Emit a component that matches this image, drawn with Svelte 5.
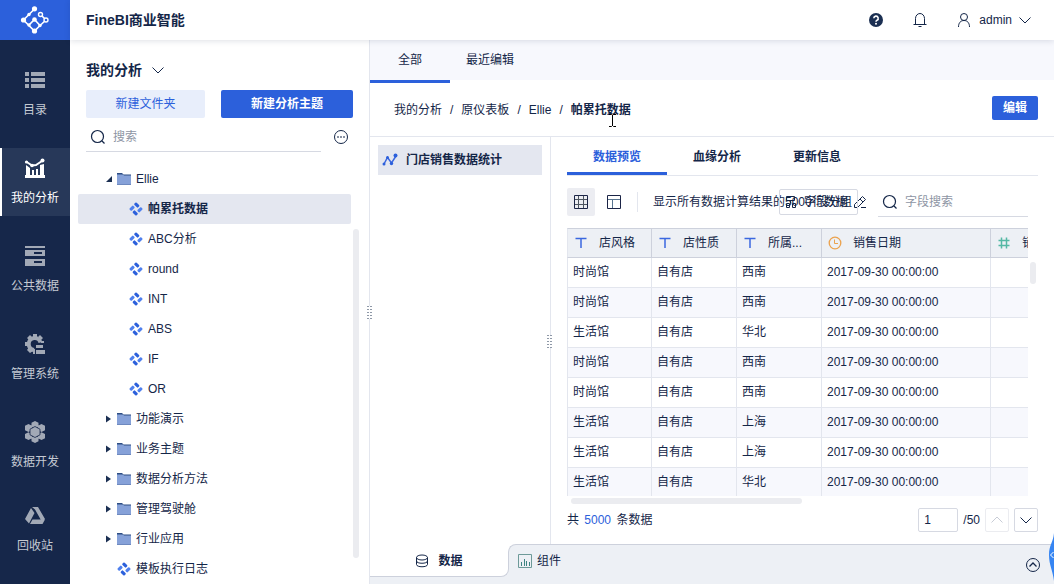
<script lang="ts">
  const navItems = [
    { id: 'catalog', label: '目录' },
    { id: 'analysis', label: '我的分析' },
    { id: 'public', label: '公共数据' },
    { id: 'system', label: '管理系统' },
    { id: 'develop', label: '数据开发' },
    { id: 'trash', label: '回收站' },
  ];

  const subjects = ['帕累托数据', 'ABC分析', 'round', 'INT', 'ABS', 'IF', 'OR'];
  const folders = ['功能演示', '业务主题', '数据分析方法', '管理驾驶舱', '行业应用'];
  const crumbs = ['我的分析', '原仪表板', 'Ellie'];
  const previewTabs = ['数据预览', '血缘分析', '更新信息'];

  const columns = [
    { name: '店风格', type: 'text' },
    { name: '店性质', type: 'text' },
    { name: '所属大区', short: '所属...', type: 'text' },
    { name: '销售日期', type: 'date' },
    { name: '销售额', type: 'number' },
  ];

  const rows = [
    ['时尚馆', '自有店', '西南'],
    ['时尚馆', '自有店', '西南'],
    ['生活馆', '自有店', '华北'],
    ['时尚馆', '自有店', '西南'],
    ['时尚馆', '自有店', '西南'],
    ['生活馆', '自有店', '上海'],
    ['生活馆', '自有店', '上海'],
    ['生活馆', '自有店', '华北'],
  ];

  let activeNav = $state('analysis');
  let activeSubject = $state('帕累托数据');
  let activePreview = $state('数据预览');
  let keyword = $state('');
  let fieldKeyword = $state('');
  let rowLimit = $state('5000');
  let page = $state('1');
</script>

{#snippet chevron()}
  <svg class="chevron" width="12" height="12" viewBox="0 0 12 12" aria-hidden="true">
    <path d="M.5 3.5 6 9l5.500-5.500" fill="none" stroke="currentColor" />
  </svg>
{/snippet}

{#snippet magnifier()}
  <svg class="magnifier" width="16" height="16" viewBox="0 0 16 16" aria-hidden="true">
    <circle cx="7.500" cy="7.500" r="6" fill="none" stroke="currentColor" stroke-width="1.200" />
    <path d="m12 12 2.500 2.500" stroke="currentColor" stroke-width="1.300" />
  </svg>
{/snippet}

{#snippet subjectIcon()}
  <svg width="14" height="14" viewBox="0 0 14 14" aria-hidden="true">
    <g transform="rotate(45 7 7)">
      <rect x="2.100" y="2.100" width="5.300" height="3.100" rx="1" fill="#2c60db" />
      <rect x="8.800" y="2.100" width="3.100" height="5.300" rx="1" fill="#4f80ee" />
      <rect x="6.600" y="8.800" width="5.300" height="3.100" rx="1" fill="#2c60db" />
      <rect x="2.100" y="6.600" width="3.100" height="5.300" rx="1" fill="#4f80ee" />
    </g>
  </svg>
{/snippet}

{#snippet folderIcon()}
  <svg width="14" height="12" viewBox="0 0 14 12" aria-hidden="true">
    <path d="M0 0h5l1.500 1.500H14V6H0Z" fill="#2d4d83" />
    <path d="M0 1.500h6L7 2.500h7V12H0Z" fill="#86a1d8" />
    <path d="M0 11.500h14" stroke="#6e89bf" />
  </svg>
{/snippet}

{#snippet navIcon(id: string)}
  <svg width="22" height="22" viewBox="0 0 22 22" fill="currentColor" aria-hidden="true">
    {#if id === 'catalog'}
      <path d="M1 3h4v4H1zM7 3h14v4H7zM1 9h4v4H1zM7 9h14v4H7zM1 15h4v4H1zM7 15h14v4H7z" />
    {:else if id === 'analysis'}
      <path d="M1 18h20v3H1zM2 8l4 3v7H2zM8 13h2v5H8zM12 12h2v6h-2zM16 8l4-1v11h-4z" />
      <path d="M2 4.500 8 8.500l4-.5 6-4" fill="none" stroke="currentColor" stroke-width="2" />
      <circle cx="2.500" cy="5" r="1.600" />
      <circle cx="8" cy="8.500" r="1.800" />
      <circle cx="18.500" cy="3.500" r="2" />
    {:else if id === 'public'}
      <path d="M1 1h20v2H1zM1 5h20v6H1zM1 14h20v7H1z" />
      <path d="M10 8h8M10 17h8" stroke="#16274a" stroke-width="2" />
    {:else if id === 'system'}
      <path d="M16.500 9.500A6 6 0 1 0 10 17" fill="none" stroke="currentColor" stroke-width="4" />
      <path d="M9 1h4v3H9zM3 5l3-3 2 2-3 3zM1 9h3v4H1zM3 17l3 3 3-2-4-4zM16 2l3 3-2 2-3-3zM17 8h3v2h-3zM9 16h2v5H9zM12 12h7v3h-7zM12 17h9v4h-9z" />
    {:else if id === 'develop'}
      <path d="m11 0 3.500 1.800v4L11 7.500 7.500 5.800v-4zM4.500 3 8 4.800v4.400L4.500 11 1 9.200V4.800zM17.500 3 21 4.800v4.400L17.500 11 14 9.200V4.800zM4.500 11.200 8 13v4.200L4.500 19 1 17.200V13zM17.500 11.200 21 13v4.200L17.500 19 14 17.200V13zM11 14.500l3.500 1.800v4L11 22l-3.500-1.700v-4z" />
      <path d="m11 5.500 5 2.700v5.600l-5 2.700-5-2.700V8.200z" stroke="#16274a" stroke-width="0.800" />
    {:else}
      <path d="M8 2h6l7 12-3.500 2L11 4.500zM7 3l3.500 5L5 18.500 1 14zM8.500 14.500H21L18.500 19H6z" />
    {/if}
  </svg>
{/snippet}

<div class="app">
  <aside class="nav">
    <a class="logo" href="#home" aria-label="FineBI">
      <svg width="30" height="30" viewBox="0 0 30 30" aria-hidden="true">
        <g fill="none" stroke="#fff" stroke-width="1.600">
          <path d="M14.500 4 3.500 15l11 11L20 20.500l6-5.500-5.500-5.500M9 20l5.500-5.500L20 20.500" />
        </g>
        <g fill="#fff">
          <circle cx="14.500" cy="3.800" r="2.600" />
          <circle cx="3.500" cy="15" r="2.600" />
          <circle cx="14.500" cy="26" r="2.600" />
          <circle cx="14.500" cy="14.500" r="2.300" />
          <circle cx="9" cy="9.500" r="1.700" />
          <circle cx="9" cy="20" r="1.700" />
          <circle cx="20" cy="20.500" r="1.700" />
        </g>
        <g fill="#2c60db" stroke="#fff" stroke-width="1.400">
          <circle cx="20.500" cy="9.500" r="2" />
          <circle cx="26" cy="15" r="2" />
        </g>
      </svg>
    </a>
    <nav aria-label="主导航">
      {#each navItems as item}
        <button
          type="button"
          class="nav-item"
          class:active={activeNav === item.id}
          onclick={() => (activeNav = item.id)}
        >
          {@render navIcon(item.id)}
          <span>{item.label}</span>
        </button>
      {/each}
    </nav>
  </aside>

  <header class="header">
    <h1>FineBI商业智能</h1>
    <div class="header-tools">
      <button type="button" aria-label="帮助">
        <svg width="16" height="16" viewBox="0 0 16 16" aria-hidden="true">
          <circle cx="8" cy="8" r="7" fill="#1b2f52" />
          <path d="M5.800 6.300a2.200 2.200 0 1 1 3.200 2q-1 .5-1 1.500" fill="none" stroke="#fff" stroke-width="1.600" />
          <circle cx="8" cy="11.800" r="1" fill="#fff" />
        </svg>
      </button>
      <button type="button" aria-label="消息">
        <svg width="16" height="16" viewBox="0 0 16 16" fill="none" stroke="currentColor" aria-hidden="true">
          <path d="M3.500 12V6.500a4.500 5 0 0 1 9 0V12M1.500 12.500h13M6.500 14.500h3" />
        </svg>
      </button>
      <button type="button" class="user">
        <svg width="16" height="16" viewBox="0 0 16 16" fill="none" stroke="currentColor" aria-hidden="true">
          <circle cx="8" cy="5" r="3.500" />
          <path d="M2.500 15c0-4 2-6.500 5.500-6.500s5.500 2.500 5.500 6.500" />
        </svg>
        <span>admin</span>
        {@render chevron()}
      </button>
    </div>
  </header>

  <section class="sidebar">
    <button type="button" class="space-switch">
      <span>我的分析</span>
      {@render chevron()}
    </button>
    <div class="create-actions">
      <button type="button" class="light">新建文件夹</button>
      <button type="button" class="primary">新建分析主题</button>
    </div>
    <div class="tree-search">
      <label class="search-box">
        {@render magnifier()}
        <input type="text" placeholder="搜索" aria-label="搜索" bind:value={keyword} />
      </label>
      <button type="button" class="more" aria-label="更多">
        <svg width="16" height="16" viewBox="0 0 16 16" aria-hidden="true">
          <circle cx="8" cy="8" r="6.500" fill="none" stroke="currentColor" />
          <path d="M4 7.500h2v1H4zM7 7.500h2v1H7zM10 7.500h2v1h-2z" fill="currentColor" />
        </svg>
      </button>
    </div>
    <ul class="tree">
      <li>
        <button type="button" class="tree-row folder">
          <svg width="6" height="6" viewBox="0 0 6 6" aria-hidden="true"><path d="M6 0v6H0z" fill="#1b2f52" /></svg>
          {@render folderIcon()}
          <span>Ellie</span>
        </button>
        <ul>
          {#each subjects as subject}
            <li>
              <button
                type="button"
                class="tree-row subject"
                class:selected={activeSubject === subject}
                onclick={() => (activeSubject = subject)}
              >
                {@render subjectIcon()}
                <span>{subject}</span>
              </button>
            </li>
          {/each}
        </ul>
      </li>
      {#each folders as folder}
        <li>
          <button type="button" class="tree-row folder">
            <svg width="6" height="8" viewBox="0 0 6 8" aria-hidden="true"><path d="M0 .5 5 4 0 7.500z" fill="#1b2f52" /></svg>
            {@render folderIcon()}
            <span>{folder}</span>
          </button>
        </li>
      {/each}
      <li>
        <button type="button" class="tree-row root-subject">
          {@render subjectIcon()}
          <span>模板执行日志</span>
        </button>
      </li>
    </ul>
    <span class="tree-thumb"></span>
    <span class="grip side-grip"></span>
  </section>

  <main class="main">
    <div class="scope-tabs">
      <button type="button" class="active">全部</button>
      <button type="button">最近编辑</button>
    </div>

    <div class="title-row">
      <div class="crumbs">
        {#each crumbs as crumb}
          <a href="#path">{crumb}</a>
          <i>/</i>
        {/each}
        <strong>帕累托数据</strong>
        <svg class="text-cursor" width="9" height="13" viewBox="0 0 9 13" aria-hidden="true">
          <path d="M1 .5h2.500l1 1 1-1H8M4.500 1v11M1 12.500h2.500l1-1 1 1H8" fill="none" stroke="#000" />
        </svg>
      </div>
      <button type="button" class="edit">编辑</button>
    </div>

    <div class="content">
      <div class="datasets">
        <button type="button" class="dataset">
          <svg width="16" height="14" viewBox="0 0 16 14" aria-hidden="true">
            <path d="M2 11 5.500 4.500 9.500 10 14 3" fill="none" stroke="#3b67e0" stroke-width="1.500" />
            <g fill="#2c60db">
              <circle cx="2" cy="11" r="1.500" />
              <circle cx="5.500" cy="4.500" r="1.500" />
              <circle cx="9.500" cy="10.500" r="1.700" />
              <circle cx="13.500" cy="2.500" r="2" />
            </g>
          </svg>
          <span>门店销售数据统计</span>
        </button>
        <span class="grip pane-grip"></span>
      </div>

      <div class="preview">
        <div class="preview-tabs">
          {#each previewTabs as tab}
            <button type="button" class:active={activePreview === tab} onclick={() => (activePreview = tab)}>{tab}</button>
          {/each}
        </div>

        <div class="toolbar">
          <button type="button" class="view active" aria-label="表格视图">
            <svg width="14" height="14" viewBox="0 0 14 14" fill="none" aria-hidden="true">
              <path d="M1 4.500h12M1 9.500h12M4.500 1v12M9.500 1v12" stroke="#4d5560" />
              <path d="M.5.5h13v13H.5z" stroke="#1b2446" />
            </svg>
          </button>
          <button type="button" class="view" aria-label="字段视图">
            <svg width="14" height="14" viewBox="0 0 14 14" fill="none" aria-hidden="true">
              <path d="M1 4.500h12M5.500 5v8" stroke="#58748f" />
              <path d="M.5.5h13v13H.5z" stroke="#1b2446" />
            </svg>
          </button>
          <span class="divider"></span>
          <label class="limit-label" for="row-limit">显示所有数据计算结果的</label>
          <div class="limit">
            <input id="row-limit" type="text" bind:value={rowLimit} />
            <span class="limit-unit">行数据</span>
            <button type="button" class="group-button">
              <svg width="12" height="12" viewBox="0 0 12 12" fill="none" stroke="currentColor" aria-hidden="true">
                <path d="M1.500.5h8v4h-8zM1.500 7.500h3v4h-3zM7.500 7.500h3v4h-3zM5.500 4.500v3" />
              </svg>
              <span>字段分组</span>
            </button>
          </div>
          <svg class="pen" width="14" height="14" viewBox="0 0 14 14" fill="none" stroke="currentColor" aria-hidden="true">
            <path d="M1.500 12.500V9.500L9.500 1.500l3 3-8 8zM7 4l3 3M8 12.500h5" />
          </svg>
          <label class="search-box field-search">
            {@render magnifier()}
            <input type="text" placeholder="字段搜索" aria-label="字段搜索" bind:value={fieldKeyword} />
          </label>
        </div>

        <div class="table-area">
          <div class="table-clip">
            <table>
              <colgroup>
                <col class="narrow" />
                <col class="narrow" />
                <col class="narrow" />
                <col class="wide" />
                <col class="wide" />
              </colgroup>
              <thead>
                <tr>
                  {#each columns as column}
                    <th scope="col">
                      <div class="field" title={column.name}>
                        <svg width="14" height="14" viewBox="0 0 14 14" fill="none" aria-hidden="true">
                          {#if column.type === 'text'}
                            <path d="M1.500 2.500h11M7 2.500V12" stroke="#3b67e0" stroke-width="1.500" />
                          {:else if column.type === 'date'}
                            <circle cx="7" cy="7" r="5.800" stroke="#eba24e" stroke-width="1.300" />
                            <path d="M6.500 3.500v4H10" stroke="#eba24e" />
                          {:else}
                            <path d="M1.500 4.500h11M1.500 9.500h11M4.500 1.500v11M9.500 1.500v11" stroke="#55b8a5" stroke-width="1.500" />
                          {/if}
                        </svg>
                        <span>{column.short ?? column.name}</span>
                      </div>
                    </th>
                  {/each}
                </tr>
              </thead>
              <tbody>
                {#each rows as row}
                  <tr>
                    {#each row as cell}
                      <td>{cell}</td>
                    {/each}
                    <td>2017-09-30 00:00:00</td>
                    <td></td>
                  </tr>
                {/each}
              </tbody>
            </table>
          </div>
          <span class="thumb-y"></span>
          <span class="thumb-x"></span>
        </div>

        <div class="pager">
          <p>共 <b>5000</b> 条数据</p>
          <input type="text" aria-label="页码" bind:value={page} />
          <span>/50</span>
          <button type="button" class="prev" aria-label="上一页" disabled>{@render chevron()}</button>
          <button type="button" aria-label="下一页">{@render chevron()}</button>
        </div>
      </div>
    </div>

    <footer class="sheets">
      <button type="button" class="data-sheet">
        <svg width="14" height="14" viewBox="0 0 14 14" fill="none" stroke="currentColor" aria-hidden="true">
          <ellipse cx="7" cy="3.500" rx="5.500" ry="2.500" />
          <path d="M1.500 3.500v7c0 3 11 3 11 0v-7M1.500 7c0 3 11 3 11 0" />
        </svg>
        <span>数据</span>
      </button>
      <div class="sheet-list">
        <button type="button" class="widget-sheet">
          <svg width="14" height="14" viewBox="0 0 14 14" fill="none" aria-hidden="true">
            <path d="M.5.5h13v13H.5z" stroke="#6d9a99" />
            <path d="M3.500 8v4M6.500 5v7M8.500 7v5M11.500 8v4" stroke="#3f8583" />
          </svg>
          <span>组件</span>
        </button>
        <button type="button" class="expand" aria-label="展开">
          <svg width="16" height="16" viewBox="0 0 16 16" fill="none" stroke="currentColor" aria-hidden="true">
            <circle cx="8" cy="8" r="6.500" />
            <path d="M4.500 9.500 8 6l3.500 3.500" stroke-width="1.300" />
          </svg>
        </button>
      </div>
    </footer>
  </main>

  <button type="button" class="drawer-handle" aria-label="展开侧栏">
    <svg width="6" height="54" viewBox="0 0 6 54" aria-hidden="true">
      <path d="M6 3C5 13 1 15 1 25S5 41 6 51Z" fill="#3685f2" />
      <path d="M5.500 22 2.500 25l3 3" fill="none" stroke="#fff" />
    </svg>
  </button>
</div>

<style>
  :global(body) {
    margin: 0;
  }

  .app {
    position: relative;
    display: grid;
    grid-template-columns: 70px 300px minmax(0, 1fr);
    grid-template-rows: 40px minmax(0, 1fr);
    height: 100vh;
    overflow: hidden;
    background: #ffffff;
    color: #142648;
    font-family: 'Liberation Sans', 'Noto Sans CJK SC', sans-serif;
    font-size: 12px;
    line-height: 18px;
  }

  button,
  input {
    box-sizing: border-box;
    min-width: 0;
    margin: 0;
    padding: 0;
    border: 0;
    background: none;
    color: inherit;
    font: inherit;
  }

  button {
    cursor: pointer;
  }

  input {
    outline: none;
  }

  input::placeholder {
    color: #8e95a4;
    opacity: 1;
  }

  svg {
    display: block;
    flex: none;
  }

  ul {
    margin: 0;
    padding: 0;
    list-style: none;
  }

  .nav {
    grid-row: 1 / 3;
    background: #16274a;
  }

  .logo {
    display: flex;
    align-items: center;
    justify-content: center;
    height: 40px;
    background: #2c60db;
  }

  .nav nav {
    display: flex;
    flex-direction: column;
    gap: 20px;
    padding-top: 20px;
  }

  .nav-item {
    display: flex;
    flex-direction: column;
    align-items: center;
    gap: 10px;
    box-sizing: border-box;
    height: 68px;
    padding-top: 9px;
    color: #a2a9b6;
  }

  .nav-item span {
    color: #c5cad3;
  }

  .nav-item.active {
    border-left: 2px solid #ffffff;
    padding-right: 2px;
    background: #273859;
    color: #ffffff;
  }

  .nav-item.active span {
    color: #ffffff;
  }

  .nav-item:last-child {
    margin-top: -4px;
  }

  .header {
    grid-column: 2 / 4;
    display: flex;
    align-items: center;
    justify-content: space-between;
    z-index: 2;
    padding: 0 23px 0 16px;
    background: #ffffff;
    box-shadow: 0 1px 6px rgba(20, 38, 72, 0.14);
  }

  h1 {
    margin: 0;
    font-size: 14px;
    line-height: 20px;
  }

  .header-tools {
    display: flex;
    align-items: center;
    gap: 28px;
  }

  .user {
    display: flex;
    align-items: center;
    gap: 7px;
  }

  .sidebar {
    position: relative;
    display: flex;
    flex-direction: column;
    min-height: 0;
    border-right: 1px solid #e3e6ee;
  }

  .space-switch {
    display: flex;
    align-items: center;
    align-self: flex-start;
    gap: 10px;
    margin: 20px 16px 10px;
    font-size: 14px;
    font-weight: 700;
    line-height: 20px;
  }

  .create-actions {
    display: grid;
    grid-template-columns: 119px 1fr;
    gap: 16px;
    padding: 0 16px;
  }

  .create-actions button {
    height: 28px;
    border-radius: 2px;
  }

  .create-actions .light {
    background: #e8eefb;
    color: #2c60db;
  }

  .create-actions .primary {
    background: #2c60db;
    color: #ffffff;
    font-weight: 700;
  }

  .tree-search {
    display: flex;
    align-items: center;
    gap: 12px;
    margin: 4px 20px 12px 16px;
  }

  .search-box {
    flex: 1;
    display: flex;
    align-items: center;
    gap: 7px;
    height: 29px;
    padding-left: 4px;
    border-bottom: 1px solid #d6d9e2;
  }

  .search-box input {
    flex: 1;
    width: 0;
  }

  .tree-row {
    display: flex;
    align-items: center;
    gap: 5px;
    width: 100%;
    height: 30px;
    border-radius: 2px;
    text-align: left;
  }

  .tree {
    min-height: 0;
    overflow: hidden;
    padding: 0 18px 0 8px;
  }

  .tree-row.folder {
    padding-left: 28px;
  }

  .tree-row.subject {
    padding-left: 51px;
  }

  .tree-row.root-subject {
    padding-left: 39px;
  }

  .tree-row.selected {
    background: #e4e7f0;
    font-weight: 700;
  }

  .tree-thumb {
    position: absolute;
    top: 189px;
    right: 10px;
    bottom: 26px;
    width: 6px;
    border-radius: 3px;
    background: #ebecf0;
  }

  .grip {
    position: absolute;
    width: 5px;
    height: 13px;
    background: repeating-linear-gradient(to bottom, #8f99a8 0 1px, #ffffff 1px 3px);
  }

  .grip::after {
    content: '';
    position: absolute;
    inset: 0 2px;
    background: #ffffff;
  }

  .side-grip {
    top: 266px;
    right: -3px;
  }

  .main {
    display: flex;
    flex-direction: column;
    min-width: 0;
    min-height: 0;
  }

  .scope-tabs {
    display: flex;
    height: 40px;
    background: #f7f8fd;
  }

  .scope-tabs button {
    width: 80px;
    height: 40px;
  }

  .scope-tabs .active {
    height: 43px;
    border-bottom: 3px solid #2c60db;
  }

  .title-row {
    display: flex;
    align-items: center;
    justify-content: space-between;
    height: 56px;
    padding: 0 16px 0 24px;
    border-bottom: 1px solid #e3e6ee;
  }

  .crumbs {
    position: relative;
    display: flex;
    gap: 8px;
    padding-top: 4px;
  }

  .crumbs a {
    color: inherit;
    text-decoration: none;
  }

  .crumbs i {
    font-style: normal;
  }

  .text-cursor {
    position: absolute;
    right: 14px;
    bottom: -8px;
  }

  .edit {
    width: 46px;
    height: 24px;
    border-radius: 2px;
    background: #2c60db;
    color: #ffffff;
    font-weight: 700;
  }

  .content {
    flex: 1;
    display: grid;
    grid-template-columns: 181px minmax(0, 1fr);
    min-height: 0;
  }

  .datasets {
    position: relative;
    padding: 8px;
    border-right: 1px solid #e3e6ee;
  }

  .dataset {
    display: flex;
    align-items: center;
    gap: 8px;
    width: 100%;
    height: 30px;
    padding-left: 4px;
    background: #e4e7f0;
    font-weight: 700;
  }

  .pane-grip {
    top: 198px;
    right: -2px;
  }

  .preview {
    display: flex;
    flex-direction: column;
    min-width: 0;
    min-height: 0;
    padding: 0 16px;
  }

  .preview-tabs {
    display: flex;
    flex: none;
    height: 38px;
    border-bottom: 1px solid #e3e6ee;
  }

  .preview-tabs button {
    width: 100px;
    padding-top: 4px;
    border-bottom: 3px solid transparent;
    font-weight: 700;
  }

  .preview-tabs .active {
    border-color: #2c60db;
    color: #2c60db;
  }

  .toolbar {
    display: flex;
    flex: none;
    align-items: center;
    height: 28px;
    margin: 12px 10px 12px 0;
  }

  .view {
    display: flex;
    align-items: center;
    justify-content: center;
    width: 28px;
    height: 28px;
    border-radius: 2px;
  }

  .view + .view {
    margin-left: 5px;
  }

  .view.active {
    background: #ecedf2;
  }

  .divider {
    width: 1px;
    height: 20px;
    margin: 0 15px 0 9px;
    background: #e3e6ee;
  }

  .limit-label {
    white-space: nowrap;
  }

  .limit {
    position: relative;
    flex: none;
    width: 79px;
    margin-left: -6px;
  }

  .limit input {
    display: block;
    width: 100%;
    height: 26px;
    padding: 0 5px;
    border: 1px solid #d6d9e2;
    border-radius: 2px;
  }

  .limit-unit {
    position: absolute;
    top: 4px;
    left: 33px;
    white-space: nowrap;
  }

  .group-button {
    position: absolute;
    top: 4px;
    left: 6px;
    display: flex;
    align-items: center;
    gap: 7px;
    white-space: nowrap;
  }

  .pen {
    margin-left: -5px;
  }

  .field-search {
    margin-left: 11px;
  }

  .table-area {
    position: relative;
    flex: 1;
    min-height: 0;
    margin-right: 10px;
  }

  .table-clip {
    height: 100%;
    overflow: hidden;
  }

  table {
    width: 593px;
    border-collapse: separate;
    border-spacing: 0;
    table-layout: fixed;
  }

  .narrow {
    width: 85px;
  }

  .wide {
    width: 169px;
  }

  th,
  td {
    box-sizing: border-box;
    height: 30px;
    padding: 0 5px 2px;
    border-right: 1px solid #e3e6ee;
    border-bottom: 1px solid #e3e6ee;
    font-weight: 400;
    text-align: left;
    white-space: nowrap;
  }

  th {
    padding: 0 6px;
    border-top: 1px solid #e3e6ee;
    border-color: #cdd1dc;
    background: #edf0f5;
  }

  th:first-child,
  td:first-child {
    border-left: 1px solid #e3e6ee;
  }

  .field {
    display: flex;
    align-items: center;
    gap: 11px;
  }

  tbody tr:nth-child(even) {
    background: #f7f8fd;
  }

  .thumb-y,
  .thumb-x {
    position: absolute;
    border-radius: 3px;
    background: #ebecf0;
  }

  .thumb-y {
    top: 34px;
    right: -8px;
    width: 6px;
    height: 22px;
  }

  .thumb-x {
    left: 4px;
    bottom: -8px;
    width: 50%;
    height: 6px;
  }

  .pager {
    display: flex;
    flex: none;
    align-items: center;
    gap: 5px;
    height: 48px;
  }

  .pager p {
    flex: 1;
    margin: 0;
  }

  .pager b {
    margin: 0 2px;
    color: #2c60db;
    font-weight: 400;
  }

  .pager input {
    width: 40px;
    height: 24px;
    padding: 0 5px;
    border: 1px solid #d6d9e2;
    border-radius: 2px;
  }

  .pager button {
    display: flex;
    align-items: center;
    justify-content: center;
    width: 24px;
    height: 24px;
    border: 1px solid #d6d9e2;
    border-radius: 2px;
  }

  .pager .prev {
    border-color: #ebecf0;
    color: #c8ccd6;
    cursor: not-allowed;
  }

  .prev .chevron {
    transform: rotate(180deg);
  }

  .sheets {
    display: flex;
    flex: none;
    align-items: flex-start;
    height: 40px;
    background: #edf0f5;
  }

  .data-sheet {
    display: flex;
    align-items: center;
    justify-content: center;
    gap: 9px;
    width: 139px;
    height: 33px;
    padding-top: 2px;
    border-right: 1px solid #cdd1dc;
    border-bottom: 1px solid #cdd1dc;
    border-radius: 0 0 8px 0;
    background: #ffffff;
    font-weight: 700;
  }

  .sheet-list {
    position: relative;
    flex: 1;
    display: flex;
    align-items: flex-start;
    justify-content: space-between;
    height: 39px;
    margin-left: -1px;
    padding: 0 13px 0 10px;
    border-top: 1px solid #cdd1dc;
  }

  .sheet-list::before,
  .sheet-list::after {
    content: '';
    position: absolute;
    top: -1px;
    left: 0;
    box-sizing: border-box;
    width: 9px;
    height: 9px;
    background: #ffffff;
  }

  .sheet-list::after {
    border-top: 1px solid #cdd1dc;
    border-left: 1px solid #cdd1dc;
    border-radius: 8px 0 0 0;
    background: #edf0f5;
  }

  .widget-sheet {
    display: flex;
    align-items: center;
    gap: 5px;
    height: 32px;
  }

  .expand {
    margin-top: 12px;
  }

  .drawer-handle {
    position: absolute;
    right: 0;
    bottom: 0;
  }
</style>
